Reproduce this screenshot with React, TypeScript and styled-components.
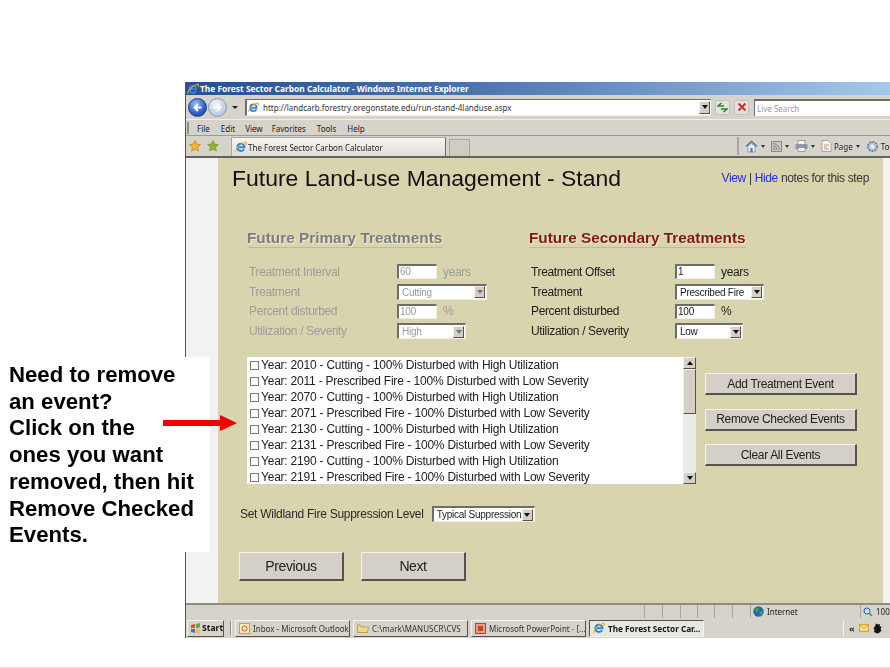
import React from "react";
import styled, { createGlobalStyle, css } from "styled-components";

const GlobalStyle = createGlobalStyle`
  html, body {
    margin: 0;
    padding: 0;
    background: #fff;
  }
  * { box-sizing: border-box; }
`;

const chromeFont = `"Noto Sans", "DejaVu Sans", sans-serif`;
const pageFont = `"Liberation Sans", Arial, sans-serif`;

const raised = css`
  border: 1px solid;
  border-color: #f4f2ec #55534e #55534e #f4f2ec;
`;

const sunken = css`
  border: 2px solid;
  border-color: #6f6d68 #f1efe3 #f1efe3 #6f6d68;
`;

const Slide = styled.div`
  position: relative;
  width: 890px;
  height: 668px;
  padding: 82px 0 0 185px;
  overflow: hidden;
  background: #fff;
  border-bottom: 1px solid #dcdcdc;
`;

const Window = styled.div`
  display: flex;
  flex-direction: column;
  width: 705px;
  height: 556px;
  border-left: 1px solid #55534e;
  background: #d6d3cb;
  color: #222;
  font-family: ${chromeFont};
  filter: blur(0.4px);
`;

const TitleBar = styled.div`
  display: flex;
  align-items: center;
  gap: 1px;
  height: 13px;
  padding-left: 1px;
  background: linear-gradient(90deg, #27508f 0%, #4a73ad 40%, #7fa3d3 75%, #a6c8ee 100%);
  color: #fff;
  font-size: 8.4px;
  font-weight: 700;
  white-space: nowrap;
`;

const AddressRow = styled.div`
  display: flex;
  align-items: center;
  height: 25px;
  padding-left: 2px;
  border-bottom: 1px solid #f0eee8;
`;

const NavCircle = styled.span<{ $active?: boolean }>`
  display: grid;
  place-items: center;
  width: 19px;
  height: 19px;
  margin-right: 1px;
  border-radius: 50%;
  border: 1px solid ${({ $active }) => ($active ? "#1b3f8f" : "#8f9db5")};
  background: ${({ $active }) =>
    $active
      ? "radial-gradient(circle at 40% 30%, #9cc0f5, #2a5fc4 60%, #173a8f)"
      : "radial-gradient(circle at 40% 30%, #f2f5fa, #bccbe2 70%, #a2b2cc)"};
`;

const DropCaret = styled.span`
  width: 0;
  height: 0;
  margin: 0 7px 0 4px;
  border-left: 3px solid transparent;
  border-right: 3px solid transparent;
  border-top: 3px solid #222;
`;

const AddressField = styled.div`
  display: flex;
  align-items: center;
  gap: 4px;
  flex: none;
  width: 466px;
  height: 17px;
  padding-left: 1px;
  ${sunken}
  border-width: 1px 0 1px 2px;
  background: #fff;
  font-size: 8px;
  color: #333;
  white-space: nowrap;
`;

const FieldText = styled.span`
  flex: 1;
`;

const ComboArrow = styled.span`
  display: grid;
  place-items: center;
  width: 11px;
  height: 13px;
  margin-right: 1px;
  ${raised}
  background: #d4d0c8;

  &::after {
    content: "";
    border-left: 3px solid transparent;
    border-right: 3px solid transparent;
    border-top: 4px solid #111;
  }
`;

const ToolTile = styled.span`
  display: grid;
  place-items: center;
  flex: none;
  width: 15px;
  height: 15px;
  margin-left: 4px;
  border: 1px solid #c4c2bb;
  border-radius: 2px;
  background: #e3e2dc;
`;

const SearchField = styled.div`
  flex: 1;
  height: 17px;
  margin-left: 5px;
  padding: 2px 0 0 2px;
  ${sunken}
  border-width: 2px 0 0 1px;
  background: #fff;
  color: #9a9a9a;
  font-size: 8px;
  line-height: 11px;
  white-space: nowrap;
`;

const MenuRow = styled.div`
  display: flex;
  align-items: center;
  height: 16px;
  padding: 1px 0 0 1px;
  border-bottom: 1px solid #9c9a93;
  font-size: 8px;
  white-space: nowrap;
`;

const Grip = styled.span`
  width: 2px;
  height: 12px;
  margin-right: 8px;
  background: #8f8d86;
`;

const MenuItem = styled.span<{ $gap: number }>`
  margin-right: ${({ $gap }) => $gap}px;
`;

const TabRow = styled.div`
  display: flex;
  align-items: flex-end;
  height: 22px;
  padding-left: 3px;
  border-bottom: 2px solid #65635e;
`;

const FavIcons = styled.span`
  display: flex;
  align-items: center;
  align-self: center;
  flex: none;
  gap: 6px;
  width: 42px;
`;

const Tab = styled.div`
  display: flex;
  align-items: center;
  flex: none;
  gap: 1px;
  width: 215px;
  height: 19px;
  padding-left: 3px;
  border: 1px solid #a9a7a0;
  border-right: 1px solid #6c6a65;
  border-bottom: 0;
  background: linear-gradient(#f7f6f3, #dfddd7);
  font-size: 8px;
  white-space: nowrap;
`;

const EmptyTab = styled.div`
  flex: none;
  width: 21px;
  height: 17px;
  margin-left: 3px;
  border: 1px solid #a9a7a0;
  border-bottom: 0;
  background: #cfccc4;
`;

const CommandBar = styled.div`
  display: flex;
  align-items: center;
  align-self: center;
  flex: none;
  gap: 2px;
  height: 18px;
  margin-left: 267px;
  padding-left: 6px;
  border-left: 2px solid #a9a7a0;
  font-size: 8px;
  white-space: nowrap;
`;

const SmallCaret = styled.span`
  width: 0;
  height: 0;
  margin: 0 4px 0 1px;
  border-left: 2.5px solid transparent;
  border-right: 2.5px solid transparent;
  border-top: 3px solid #333;
`;

const PageArea = styled.div`
  display: grid;
  grid-template-columns: 32px 665px 1fr;
  flex: 1;
  min-height: 0;
  font-family: ${pageFont};
`;

const Gutter = styled.div`
  background: #f2f2f0;
`;

const Main = styled.main`
  padding-top: 6px;
  background: #d8d5ae;
  color: #1d1d1a;
`;

const Header = styled.header`
  display: flex;
  align-items: center;
  justify-content: space-between;
  padding: 0 14px 0 14px;
`;

const PageTitle = styled.h1`
  margin: 0;
  color: #111;
  font-size: 22.95px;
  font-weight: 400;
  line-height: 28px;
  white-space: nowrap;
`;

const Notes = styled.div`
  font-size: 12px;
  letter-spacing: -0.35px;
  color: #333;
`;

const NoteLink = styled.a`
  color: #2a2ae0;
`;

const TreatmentColumns = styled.div`
  display: grid;
  grid-template-columns: 282px 1fr;
  margin-top: 37px;
  padding-left: 29px;
`;

const SectionTitle = styled.h2<{ $disabled?: boolean }>`
  width: fit-content;
  margin: 0 0 14px;
  padding-bottom: 1px;
  border-bottom: 1px solid #bdbb98;
  color: ${({ $disabled }) => ($disabled ? "#7c7c84" : "#861414")};
  font-size: 15.35px;
  font-weight: 700;
  line-height: 17px;
  text-shadow: 1px 1px 1px #f1efd9;
  white-space: nowrap;
`;

const FieldGrid = styled.div<{ $disabled?: boolean; $labelWidth: number }>`
  display: grid;
  grid-template-columns: ${({ $labelWidth }) => $labelWidth}px 1fr;
  grid-auto-rows: 19.8px;
  align-items: center;
  padding-left: 2px;
  color: ${({ $disabled }) => ($disabled ? "#9d9d9a" : "#1d1d1a")};
  font-size: 12px;
  letter-spacing: -0.35px;
`;

const ControlCell = styled.div`
  display: flex;
  align-items: center;
  gap: 6px;
`;

const TextBox = styled.div<{ $disabled?: boolean }>`
  width: 40px;
  height: 15px;
  padding-left: 1px;
  ${sunken}
  border-width: 2px 1px 1px 2px;
  background: #fff;
  color: ${({ $disabled }) => ($disabled ? "#9a9a9a" : "#222")};
  font-size: 10px;
  letter-spacing: -0.2px;
  line-height: 11px;
`;

const SelectBox = styled.div<{ $width: number; $disabled?: boolean }>`
  display: flex;
  align-items: center;
  justify-content: space-between;
  flex: none;
  width: ${({ $width }) => $width}px;
  height: 16px;
  padding-left: 3px;
  ${sunken}
  border-width: 2px 1px 1px 2px;
  background: #fff;
  color: ${({ $disabled }) => ($disabled ? "#9a9a9a" : "#222")};
  font-size: 10px;
  letter-spacing: -0.25px;
  white-space: nowrap;
`;

const SelectArrow = styled.span<{ $disabled?: boolean }>`
  display: grid;
  place-items: center;
  width: 11px;
  height: 12px;
  margin-right: 1px;
  ${raised}
  background: #d4d0c8;

  &::after {
    content: "";
    border-left: 3px solid transparent;
    border-right: 3px solid transparent;
    border-top: 4px solid ${({ $disabled }) => ($disabled ? "#777" : "#111")};
  }
`;

const EventsRow = styled.div`
  display: flex;
  align-items: flex-start;
  margin-top: 16px;
  padding-left: 29px;
`;

const EventList = styled.div`
  display: flex;
  flex: none;
  width: 449px;
  height: 127px;
  background: #fff;
`;

const EventRows = styled.ul`
  flex: 1;
  margin: 0;
  padding: 0 0 0 3px;
  overflow: hidden;
  list-style: none;
`;

const EventRow = styled.li`
  display: flex;
  align-items: center;
  gap: 2px;
  height: 16px;
  font-size: 12px;
  letter-spacing: -0.22px;
  color: #222;
  white-space: nowrap;
`;

const CheckBox = styled.span`
  width: 9px;
  height: 9px;
  border: 1px solid #777;
  background: #fff;
`;

const ScrollTrack = styled.div`
  display: flex;
  flex-direction: column;
  width: 13px;
  background: #ecebe7;
`;

const ScrollButton = styled.span<{ $up?: boolean }>`
  display: grid;
  place-items: center;
  width: 13px;
  height: 12px;
  ${raised}
  background: #d4d0c8;

  &::after {
    content: "";
    border-left: 3px solid transparent;
    border-right: 3px solid transparent;
    ${({ $up }) =>
      $up ? "border-bottom: 4px solid #111;" : "border-top: 4px solid #111;"}
  }
`;

const ScrollThumb = styled.span`
  width: 13px;
  height: 45px;
  ${raised}
  background: #d4d0c8;
`;

const ScrollSpace = styled.span`
  flex: 1;
`;

const ActionStack = styled.div`
  display: flex;
  flex-direction: column;
  gap: 13.5px;
  margin: 16px 0 0 9px;
`;

const PageButton = styled.button<{ $wide?: boolean }>`
  width: ${({ $wide }) => ($wide ? "152px" : "105px")};
  height: ${({ $wide }) => ($wide ? "22px" : "29px")};
  padding: 0;
  ${raised}
  border-right-width: 2px;
  border-bottom-width: 2px;
  background: #d4d0c8;
  color: #222;
  font-family: ${pageFont};
  font-size: ${({ $wide }) => ($wide ? "12px" : "14px")};
  letter-spacing: ${({ $wide }) => ($wide ? "-0.33px" : "-0.4px")};
`;

const SuppressionRow = styled.div`
  display: flex;
  align-items: center;
  gap: 8px;
  margin-top: 22px;
  padding-left: 22px;
  font-size: 12px;
  letter-spacing: -0.28px;
  color: #2a2a26;
`;

const NavRow = styled.div`
  display: flex;
  gap: 17px;
  margin-top: 30px;
  padding-left: 21px;
`;

const StatusBar = styled.div`
  display: flex;
  height: 15px;
  border-top: 2px solid #8e8c85;
  font-size: 8px;
`;

const StatusGap = styled.div`
  flex: none;
  width: 458px;
`;

const StatusCell = styled.div<{ $width: number }>`
  display: flex;
  align-items: center;
  flex: none;
  gap: 3px;
  width: ${({ $width }) => $width}px;
  padding-left: 2px;
  border-left: 1px solid #a9a7a0;
  white-space: nowrap;
`;

const Taskbar = styled.div`
  display: flex;
  align-items: center;
  height: 20px;
  padding-left: 1px;
  font-size: 8px;
  white-space: nowrap;
`;

const StartButton = styled.div`
  display: flex;
  align-items: center;
  flex: none;
  gap: 1px;
  width: 37px;
  height: 17px;
  padding-left: 2px;
  ${raised}
  font-size: 8.6px;
  font-weight: 700;
  color: #111;
`;

const TaskSeparator = styled.span`
  flex: none;
  width: 2px;
  height: 14px;
  margin: 0 3px 0 6px;
  background: #f1efe9;
  border-left: 1px solid #8e8c85;
`;

const TaskButton = styled.div<{ $active?: boolean }>`
  display: flex;
  align-items: center;
  flex: none;
  gap: 3px;
  width: 115px;
  height: 17px;
  margin-right: 3px;
  padding-left: 3px;
  border: 1px solid;
  border-color: ${({ $active }) =>
    $active
      ? "#55534e #f4f2ec #f4f2ec #55534e"
      : "#f4f2ec #55534e #55534e #f4f2ec"};
  background: ${({ $active }) => ($active ? "#e9e7e1" : "transparent")};
  font-size: ${({ $active }) => ($active ? "8.2px" : "8px")};
  font-weight: ${({ $active }) => ($active ? 700 : 400)};
  color: ${({ $active }) => ($active ? "#111" : "#333")};
  overflow: hidden;
`;

const Tray = styled.div`
  display: flex;
  align-items: center;
  flex: none;
  gap: 4px;
  width: 47px;
  height: 17px;
  margin-left: 136px;
  padding-left: 5px;
  border-left: 1px solid #f4f2ec;
  font-size: 9px;
  font-weight: 700;
`;

const Callout = styled.div`
  position: absolute;
  left: 0;
  top: 357px;
  width: 210px;
  height: 195px;
  padding: 5px 0 0 9px;
  background: #fff;
  color: #000;
  font-family: ${pageFont};
  font-size: 22.2px;
  font-weight: 700;
  line-height: 26.7px;
  box-shadow: 8px 0 0 #f1f1f1;
`;

const Arrow = styled.svg`
  position: absolute;
  left: 163px;
  top: 414px;
`;

function IeLogo({ size = 12 }: { size?: number }) {
  return (
    <svg width={size} height={size} viewBox="0 0 16 16" fill="none" style={{ flex: "none" }}>
      <path d="M3.2 8.4h9.4C12.6 5.4 10.7 3.6 8 3.6 5.4 3.6 3.3 5.7 3.2 8.4c0 3 2.1 4.9 4.8 4.9 1.9 0 3.4-.9 4.2-2.5" stroke="#2a86e0" strokeWidth="2.6" />
      <path d="M1.2 14.6C-.2 12.6 5.6 4.2 14 1.6c1.6-.5 1.6 2 .6 3.6" stroke="#f0a820" strokeWidth="1.5" />
    </svg>
  );
}

function Star({ color }: { color: string }) {
  return (
    <svg width="12" height="12" viewBox="0 0 12 12">
      <path d="M6 .6l1.7 3.5 3.8.5-2.8 2.6.7 3.8L6 9.2 2.6 11l.7-3.8L.5 4.6l3.8-.5z" fill={color} stroke="#a87a18" strokeWidth=".6" />
    </svg>
  );
}

function NavArrow({ back }: { back?: boolean }) {
  return (
    <svg width="11" height="11" viewBox="0 0 11 11" style={{ transform: back ? "none" : "scaleX(-1)" }}>
      <path d="M9.5 5.5h-6M6 2L2.5 5.5 6 9" fill="none" stroke="#fff" strokeWidth="2" />
    </svg>
  );
}

function HomeIcon() {
  return (
    <svg width="13" height="13" viewBox="0 0 13 13">
      <path d="M1 6.5L6.5 1.5 12 6.5" fill="none" stroke="#4c6fa8" strokeWidth="1.4" />
      <path d="M3 6.5v5.5h7V6.5L6.5 3.5z" fill="#eef0f4" stroke="#6f84a8" strokeWidth=".7" />
      <rect x="5.4" y="8" width="2.2" height="4" fill="#3f7bc4" />
    </svg>
  );
}

function FeedIcon() {
  return (
    <svg width="11" height="11" viewBox="0 0 11 11">
      <rect x=".5" y=".5" width="10" height="10" fill="#c9c7c0" stroke="#8c8a84" />
      <circle cx="3" cy="8" r="1" fill="#85837d" />
      <path d="M2 5a4 4 0 0 1 4 4M2 2.6A6.4 6.4 0 0 1 8.4 9" fill="none" stroke="#85837d" />
    </svg>
  );
}

function PrintIcon() {
  return (
    <svg width="13" height="12" viewBox="0 0 13 12">
      <rect x="3" y=".5" width="7" height="4" fill="#f4f4f4" stroke="#777" strokeWidth=".6" />
      <rect x=".5" y="4" width="12" height="5" rx="1" fill="#8f98a8" />
      <rect x="3" y="7.5" width="7" height="4" fill="#f4f4f4" stroke="#777" strokeWidth=".6" />
    </svg>
  );
}

function PageIcon() {
  return (
    <svg width="11" height="12" viewBox="0 0 11 12">
      <path d="M1 .5h6l3 3v8H1z" fill="#f6f6f2" stroke="#8c8a84" strokeWidth=".7" />
      <path d="M3 5h5M3 7h3M3 9h5" stroke="#c0803a" strokeWidth=".8" />
    </svg>
  );
}

function GearIcon() {
  return (
    <svg width="13" height="13" viewBox="0 0 13 13">
      <circle cx="6.5" cy="6.5" r="4.6" fill="#b9c9dd" stroke="#7187a5" strokeWidth="2" strokeDasharray="2 1" />
      <circle cx="6.5" cy="6.5" r="2" fill="#eef2f7" />
    </svg>
  );
}

function GlobeIcon() {
  return (
    <svg width="11" height="11" viewBox="0 0 11 11" style={{ flex: "none" }}>
      <circle cx="5.5" cy="5.5" r="5.2" fill="#2a66b8" />
      <path d="M2 3.5c1.5-1.6 3-1.8 4-1l-.6 2L3.6 6.6zM6.4 6l2.8-1 .6 2.4-2.2 1.8z" fill="#43a84a" />
    </svg>
  );
}

function ZoomIcon() {
  return (
    <svg width="10" height="10" viewBox="0 0 10 10" style={{ flex: "none" }}>
      <circle cx="4" cy="4" r="3" fill="#cfe2f7" stroke="#2a66b8" />
      <path d="M6 6l3 3" stroke="#8a6a3a" strokeWidth="1.4" />
    </svg>
  );
}

function WindowsFlag() {
  return (
    <svg width="11" height="11" viewBox="0 0 11 11" style={{ flex: "none" }}>
      <path d="M1 2l4-1v4H1z" fill="#e0502a" />
      <path d="M6 1l4-1v4.6L6 5z" fill="#5cae3c" />
      <path d="M1 6h4v4l-4-1z" fill="#3a74d0" />
      <path d="M6 6l4 .2V10.6L6 10z" fill="#f0c030" />
    </svg>
  );
}

function OutlookIcon() {
  return (
    <svg width="11" height="11" viewBox="0 0 11 11" style={{ flex: "none" }}>
      <rect x=".5" y=".5" width="10" height="10" fill="#fbe7b8" stroke="#e09a2a" />
      <circle cx="5.5" cy="5.5" r="2.6" fill="none" stroke="#c0601a" />
    </svg>
  );
}

function FolderIcon() {
  return (
    <svg width="12" height="10" viewBox="0 0 12 10" style={{ flex: "none" }}>
      <path d="M.5 2V9.5h10L11.5 4H4L3 2z" fill="#f3d97a" stroke="#a98b2e" strokeWidth=".7" />
    </svg>
  );
}

function PowerPointIcon() {
  return (
    <svg width="11" height="11" viewBox="0 0 11 11" style={{ flex: "none" }}>
      <rect x=".5" y=".5" width="10" height="10" fill="#e8a080" stroke="#b5421c" />
      <rect x="3" y="3" width="5" height="5" fill="#c8401c" />
    </svg>
  );
}

function MailIcon() {
  return (
    <svg width="10" height="8" viewBox="0 0 10 8" style={{ flex: "none" }}>
      <rect x=".5" y=".5" width="9" height="7" fill="#f6dc86" stroke="#c9a53c" />
      <path d="M.5.5L5 4.5 9.5.5" fill="none" stroke="#c9a53c" />
    </svg>
  );
}

function TrayBlot() {
  return (
    <svg width="9" height="11" viewBox="0 0 9 11" style={{ flex: "none" }}>
      <path d="M3 .5l2 1 2-.5-.5 2 2 1-1 2 1 1.500-2 2-1.500 1-2-.5-2-1 .5-2L.5 5l1.500-1.500z" fill="#111" />
    </svg>
  );
}

const primaryFields = [
  { label: "Treatment Interval", kind: "text", value: "60", unit: "years" },
  { label: "Treatment", kind: "select", value: "Cutting", width: 90 },
  { label: "Percent disturbed", kind: "text", value: "100", unit: "%" },
  { label: "Utilization / Severity", kind: "select", value: "High", width: 69 },
];

const secondaryFields = [
  { label: "Treatment Offset", kind: "text", value: "1", unit: "years" },
  { label: "Treatment", kind: "select", value: "Prescribed Fire", width: 89 },
  { label: "Percent disturbed", kind: "text", value: "100", unit: "%" },
  { label: "Utilization / Severity", kind: "select", value: "Low", width: 68 },
];

const events = [
  "Year: 2010 - Cutting - 100% Disturbed with High Utilization",
  "Year: 2011 - Prescribed Fire - 100% Disturbed with Low Severity",
  "Year: 2070 - Cutting - 100% Disturbed with High Utilization",
  "Year: 2071 - Prescribed Fire - 100% Disturbed with Low Severity",
  "Year: 2130 - Cutting - 100% Disturbed with High Utilization",
  "Year: 2131 - Prescribed Fire - 100% Disturbed with Low Severity",
  "Year: 2190 - Cutting - 100% Disturbed with High Utilization",
  "Year: 2191 - Prescribed Fire - 100% Disturbed with Low Severity",
];

function Fields({
  fields,
  disabled,
  labelWidth,
}: {
  fields: typeof primaryFields;
  disabled?: boolean;
  labelWidth: number;
}) {
  return (
    <FieldGrid $disabled={disabled} $labelWidth={labelWidth}>
      {fields.map((field) => (
        <React.Fragment key={field.label}>
          <span>{field.label}</span>
          <ControlCell>
            {field.kind === "text" ? (
              <TextBox $disabled={disabled}>{field.value}</TextBox>
            ) : (
              <SelectBox $width={field.width ?? 90} $disabled={disabled}>
                {field.value}
                <SelectArrow $disabled={disabled} />
              </SelectBox>
            )}
            {field.unit && <span>{field.unit}</span>}
          </ControlCell>
        </React.Fragment>
      ))}
    </FieldGrid>
  );
}

export default function App() {
  return (
    <Slide>
      <GlobalStyle />
      <Window>
        <TitleBar>
          <IeLogo />
          The Forest Sector Carbon Calculator - Windows Internet Explorer
        </TitleBar>
        <AddressRow>
          <NavCircle $active>
            <NavArrow back />
          </NavCircle>
          <NavCircle>
            <NavArrow />
          </NavCircle>
          <DropCaret />
          <AddressField>
            <IeLogo size={11} />
            <FieldText>http://landcarb.forestry.oregonstate.edu/run-stand-4landuse.aspx</FieldText>
            <ComboArrow />
          </AddressField>
          <ToolTile>
            <svg width="11" height="11" viewBox="0 0 11 11">
              <path d="M4.5 1L1 4h6M6.5 10L10 7H4" fill="none" stroke="#2a8a2a" strokeWidth="1.6" />
            </svg>
          </ToolTile>
          <ToolTile>
            <svg width="10" height="10" viewBox="0 0 10 10">
              <path d="M1.5 1.5l7 7M8.5 1.5l-7 7" stroke="#d02a2a" strokeWidth="1.8" />
            </svg>
          </ToolTile>
          <SearchField>Live Search</SearchField>
        </AddressRow>
        <MenuRow>
          <Grip />
          <MenuItem $gap={11}>File</MenuItem>
          <MenuItem $gap={10}>Edit</MenuItem>
          <MenuItem $gap={9}>View</MenuItem>
          <MenuItem $gap={11}>Favorites</MenuItem>
          <MenuItem $gap={11}>Tools</MenuItem>
          <MenuItem $gap={0}>Help</MenuItem>
        </MenuRow>
        <TabRow>
          <FavIcons>
            <Star color="#f2b52a" />
            <Star color="#7fb83a" />
          </FavIcons>
          <Tab>
            <IeLogo />
            The Forest Sector Carbon Calculator
          </Tab>
          <EmptyTab />
          <CommandBar>
            <HomeIcon />
            <SmallCaret />
            <FeedIcon />
            <SmallCaret />
            <PrintIcon />
            <SmallCaret />
            <PageIcon />
            Page
            <SmallCaret />
            <GearIcon />
            Tools
          </CommandBar>
        </TabRow>
        <PageArea>
          <Gutter />
          <Main>
            <Header>
              <PageTitle>Future Land-use Management - Stand</PageTitle>
              <Notes>
                <NoteLink>View</NoteLink> | <NoteLink>Hide</NoteLink> notes for this step
              </Notes>
            </Header>
            <TreatmentColumns>
              <section>
                <SectionTitle $disabled>Future Primary Treatments</SectionTitle>
                <Fields fields={primaryFields} disabled labelWidth={148} />
              </section>
              <section>
                <SectionTitle>Future Secondary Treatments</SectionTitle>
                <Fields fields={secondaryFields} labelWidth={144} />
              </section>
            </TreatmentColumns>
            <EventsRow>
              <EventList>
                <EventRows>
                  {events.map((event) => (
                    <EventRow key={event}>
                      <CheckBox />
                      {event}
                    </EventRow>
                  ))}
                </EventRows>
                <ScrollTrack>
                  <ScrollButton $up />
                  <ScrollThumb />
                  <ScrollSpace />
                  <ScrollButton />
                </ScrollTrack>
              </EventList>
              <ActionStack>
                <PageButton $wide>Add Treatment Event</PageButton>
                <PageButton $wide>Remove Checked Events</PageButton>
                <PageButton $wide>Clear All Events</PageButton>
              </ActionStack>
            </EventsRow>
            <SuppressionRow>
              Set Wildland Fire Suppression Level
              <SelectBox $width={103}>
                Typical Suppression
                <SelectArrow />
              </SelectBox>
            </SuppressionRow>
            <NavRow>
              <PageButton>Previous</PageButton>
              <PageButton>Next</PageButton>
            </NavRow>
          </Main>
          <Gutter />
        </PageArea>
        <StatusBar>
          <StatusGap />
          {[18, 18, 17, 17, 18, 18].map((width, index) => (
            <StatusCell key={index} $width={width} />
          ))}
          <StatusCell $width={110}>
            <GlobeIcon />
            Internet
          </StatusCell>
          <StatusCell $width={30}>
            <ZoomIcon />
            100%
          </StatusCell>
        </StatusBar>
        <Taskbar>
          <StartButton>
            <WindowsFlag />
            Start
          </StartButton>
          <TaskSeparator />
          <TaskButton>
            <OutlookIcon />
            Inbox - Microsoft Outlook
          </TaskButton>
          <TaskButton>
            <FolderIcon />
            C:\mark\MANUSCR\CVS
          </TaskButton>
          <TaskButton>
            <PowerPointIcon />
            Microsoft PowerPoint - [...
          </TaskButton>
          <TaskButton $active>
            <IeLogo />
            The Forest Sector Car...
          </TaskButton>
          <Tray>
            «
            <MailIcon />
            <TrayBlot />
          </Tray>
        </Taskbar>
      </Window>
      <Callout>
        Need to remove
        <br />
        an event?
        <br />
        Click on the
        <br />
        ones you want
        <br />
        removed, then hit
        <br />
        Remove Checked
        <br />
        Events.
      </Callout>
      <Arrow width="76" height="18" viewBox="0 0 76 18">
        <path d="M0 6h57V1l17 8-17 8v-5H0z" fill="#f00000" />
      </Arrow>
    </Slide>
  );
}
